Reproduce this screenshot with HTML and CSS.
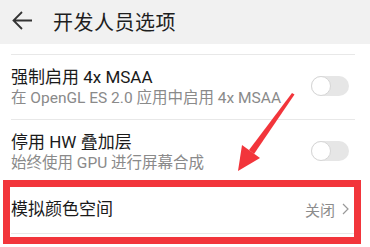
FILE: index.html
```html
<!DOCTYPE html>
<html>
	<head>
		<meta charset="UTF-8">
		<title>开发人员选项</title>
		<link rel="stylesheet" href="styles.css">
	</head>
	<body>
		<div class="header">
			<svg class="back" width="24" height="24" viewBox="0 0 24 24">
				<path d="M11 3 L2.5 11.5 L11 20 M2.5 11.5 L21 11.5" fill="none" stroke="#333" stroke-width="1.8"/>
			</svg>
			<span class="title">开发人员选项</span>
		</div>
		<div class="list">
			<div class="spacer"></div>
			<div class="row">
				<div class="text">
					<div class="name">强制启用 4x MSAA</div>
					<div class="desc">在 OpenGL ES 2.0 应用中启用 4x MSAA</div>
				</div>
				<div class="toggle"><span class="knob"></span></div>
			</div>
			<div class="row">
				<div class="text">
					<div class="name">停用 HW 叠加层</div>
					<div class="desc">始终使用 GPU 进行屏幕合成</div>
				</div>
				<div class="toggle"><span class="knob"></span></div>
			</div>
			<div class="row single">
				<div class="name">模拟颜色空间</div>
				<div class="value">关闭
					<svg width="7" height="12" viewBox="0 0 7 12"><path d="M1 1 L6 6 L1 11" fill="none" stroke="#999" stroke-width="1.2"/></svg>
				</div>
			</div>
		</div>
		<!--标注-->
		<div class="mark"></div>
		<svg class="arrow" width="370" height="247" viewBox="0 0 370 247">
			<polygon points="292,93 294.5,94.5 254,154 249,150" fill="#f2353b"/>
			<polygon points="238,171 242,145 260,158" fill="#f2353b"/>
		</svg>
	</body>
</html>
```

FILE: styles.css
```css
body{
	margin: 0;
	background: #fff;
	font-family: Roboto, "Noto Sans CJK SC", sans-serif;
	width: 370px;
	height: 247px;
	overflow: hidden;
	position: relative;
}
.header{
	height: 44px;
	background: #f1f1f1;
	display: flex;
	align-items: center;
	padding-left: 11px;
}
.back{
	margin-right: 18px;
	margin-top: -2px;
}
.title{
	font-size: 20px;
	color: #1e1e1e;
	letter-spacing: 0.5px;
	margin-top: -2px;
}
.list{
	padding: 0 15px 0 11px;
}
.spacer{
	height: 10px;
	border-bottom: 1px solid #e8e8e8;
}
.row{
	display: flex;
	align-items: center;
	justify-content: space-between;
	height: 64px;
	border-bottom: 1px solid #e8e8e8;
	padding-right: 6px;
}
.row.single{
	height: 48px;
}
.name{
	font-size: 17px;
	color: #1a1a1a;
	line-height: 22px;
}
.desc{
	font-size: 15.5px;
	color: #8a8a8a;
	line-height: 19px;
	margin-top: 1px;
}
.toggle{
	width: 38px;
	height: 20px;
	border-radius: 10px;
	background: #e6e6e6;
	position: relative;
	margin-top: -2px;
}
.knob{
	position: absolute;
	left: 0;
	top: 0;
	width: 18px;
	height: 18px;
	border-radius: 50%;
	background: #fff;
	border: 1px solid #d6d6d6;
}
.value{
	display: flex;
	align-items: center;
	gap: 7px;
	font-size: 15px;
	color: #8c8c8c;
}
.mark{
	position: absolute;
	left: 3px;
	top: 180px;
	width: 344px;
	height: 50px;
	border: 7px solid #f2353b;
}
.arrow{
	position: absolute;
	left: 0;
	top: 0;
}
```
